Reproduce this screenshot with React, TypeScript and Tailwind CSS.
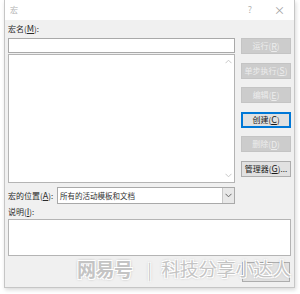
const font = { fontFamily: '"Noto Sans CJK SC", "Noto Sans", sans-serif' }

const SideButton = ({ label, hot, tail = '', enabled = false, focused = false }: { label: string; hot: string; tail?: string; enabled?: boolean; focused?: boolean }) => (
  <div
    className={`h-[16px] w-[50px] flex items-center justify-center text-[8px] leading-none ${
      focused
        ? 'bg-[#e1e1e1] border-2 border-[#0078d7] text-[#1a1a1a]'
        : enabled
        ? 'bg-[#e1e1e1] border border-[#adadad] text-[#1a1a1a]'
        : 'bg-[#cccccc] border border-[#c4c4c4] text-[#ececec]'
    }`}
  >
    {label}(<span className="underline text-[9px]">{hot}</span>){tail}
  </div>
)

const ChevronDown = ({ className = '' }: { className?: string }) => (
  <svg width="7" height="5" viewBox="0 0 7 5" className={className}>
    <path d="M0.5 0.8 L3.5 3.8 L6.5 0.8" fill="none" stroke="currentColor" strokeWidth="1" />
  </svg>
)

const App = () => {
  return (
    <div className="relative w-[300px] h-[294px] bg-white" style={font}>
      <div className="ml-[4px] w-[291px] h-[288px] border-x border-b border-[#c6c6c6] shadow-[1px_2px_4px_rgba(0,0,0,0.15)] flex flex-col">
        <div className="h-[20px] bg-white flex items-center px-[5px] text-[#b4b4b4]">
          <span className="text-[8px]">宏</span>
          <span className="ml-auto text-[9px] mr-[22px]">?</span>
          <span className="text-[11px] mr-[4px] leading-none text-[#a0a0a0]">×</span>
        </div>

        <div className="flex-1 bg-[#f0f0f0] px-[3px] pt-[2px] flex flex-col text-[8px] text-[#2a2a2a]">
          <div className="h-[14px] leading-[14px]">
            宏名(<span className="underline text-[9px]">M</span>):
          </div>
          <div className="mt-[2px] flex gap-[6px]">
            <div className="w-[227px] flex flex-col gap-[1px]">
              <div className="h-[15px] bg-white border border-[#a9a9a9]" />
              <div className="h-[129px] bg-white border border-[#b4b4b4] flex justify-end">
                <div className="w-[12px] flex flex-col items-center justify-between py-[4px] text-[#c8c8c8]">
                  <ChevronDown className="rotate-180" />
                  <ChevronDown />
                </div>
              </div>
            </div>
            <div className="flex flex-col gap-[8.6px]">
              <SideButton label="运行" hot="R" />
              <SideButton label="单步执行" hot="S" />
              <SideButton label="编辑" hot="E" />
              <SideButton label="创建" hot="C" focused />
              <SideButton label="删除" hot="D" />
              <SideButton label="管理器" hot="G" tail="..." enabled />
            </div>
          </div>

          <div className="mt-[4px] w-[227px] h-[17px] flex items-center">
            <div className="w-[49px] whitespace-nowrap">
              宏的位置(<span className="underline text-[9px]">A</span>):
            </div>
            <div className="flex-1 h-full bg-white border border-[#a9a9a9] flex items-center">
              <span className="pl-[2px] text-[7.5px] text-[#333]">所有的活动模板和文档</span>
              <div className="ml-auto w-[12px] h-full bg-[#e8e8e8] border-l border-[#c8c8c8] flex items-center justify-center text-[#666]">
                <ChevronDown />
              </div>
            </div>
          </div>

          <div className="h-[15px] leading-[16px]">
            说明(<span className="underline text-[9px]">I</span>):
          </div>
          <div className="h-[37px] bg-white border border-[#b4b4b4]" />

          <div className="mt-[6px] self-end mr-[1px] w-[48px] h-[20px] bg-[#e1e1e1] border border-[#adadad]" />
        </div>
      </div>

      <div className="absolute left-[77px] top-[255px] flex items-center whitespace-nowrap text-[#c4c4c4] [text-shadow:1px_1px_0_#fff,-1px_-1px_0_#fff,1px_-1px_0_#fff,-1px_1px_0_#fff,0_0_3px_rgba(0,0,0,0.5)]">
        <span className="text-[19px] font-bold tracking-[-0.5px]">网易号</span>
        <span className="ml-[15px] text-[16px] font-light">|</span>
        <span className="ml-[10px] text-[18.5px]">科技分享小达人</span>
      </div>
    </div>
  )
}

export default App
